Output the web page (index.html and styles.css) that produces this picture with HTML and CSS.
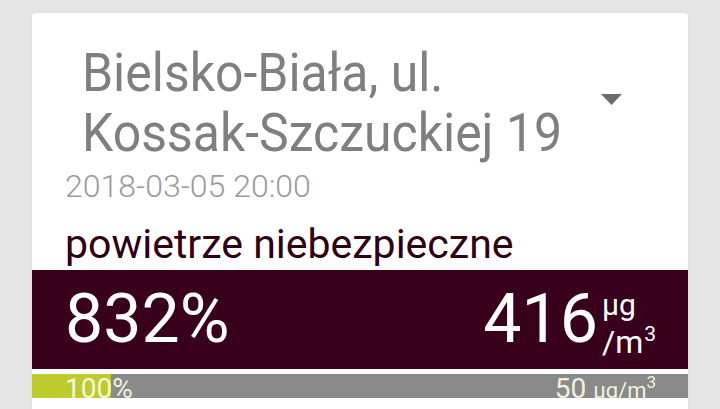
FILE: index.html
```html
<!DOCTYPE html>
<html lang="pl">
<head>
<meta charset="utf-8">
<title>Jakość powietrza</title>
<link rel="stylesheet" href="styles.css">
</head>
<body>
<div class="card">
  <div class="header">
    <div class="title">Bielsko-Biała, ul.<br>Kossak-Szczuckiej 19</div>
    <svg class="caret" width="21" height="11" viewBox="0 0 21 11"><path d="M0 0 H21 L10.5 11 Z" fill="#6b6b6b"/></svg>
  </div>
  <div class="date">2018-03-05 20:00</div>
  <div class="status">powietrze niebezpieczne</div>
  <div class="band">
    <div class="percent">832%</div>
    <div class="value">
      <span class="num">416</span>
      <span class="unit">
        <span class="unit-top">µg</span>
        <span class="unit-bottom">/m<span class="pow">3</span></span>
      </span>
    </div>
  </div>
  <div class="norm">
    <div class="norm-fill" style="width: 12%"></div>
    <div class="norm-text">
      <span class="norm-pct">100%</span>
      <span class="norm-limit">50 <span class="small">µg/m</span><span class="sup">3</span></span>
    </div>
  </div>
  <div class="rest"></div>
</div>
</body>
</html>
```

FILE: styles.css
```css
html, body {
  margin: 0;
  padding: 0;
}
body {
  background: #e5e5e5;
  font-family: Roboto, "Noto Sans", sans-serif;
  height: 409px;
  overflow: hidden;
  padding-top: 13px;
  box-sizing: border-box;
}
.card {
  margin: 0 32px;
  background: #ffffff;
  border-radius: 3px 3px 0 0;
  box-shadow: 0 0 2px rgba(0,0,0,0.08);
  padding-top: 30px;
}
.header {
  display: grid;
  grid-template-columns: 1fr 21px;
  align-items: start;
  padding-left: 50px;
  padding-right: 69px;
}
.title {
  font-size: 54px;
  line-height: 60px;
  color: #7f7f7f;
  font-weight: 400;
  white-space: nowrap;
  transform: scaleX(0.925);
  transform-origin: left top;
}
.caret {
  margin-top: 51px;
  display: block;
}
.date {
  margin-top: 5px;
  padding-left: 33px;
  font-size: 32px;
  line-height: 36px;
  color: #9b9b9b;
  font-weight: 300;
}
.status {
  margin-top: 18px;
  padding-left: 33px;
  font-size: 41px;
  line-height: 44px;
  color: #2d0014;
  margin-bottom: 4px;
}
.band {
  height: 99px;
  box-sizing: border-box;
  background: #38001b;
  color: #ffffff;
  display: flex;
  justify-content: space-between;
  align-items: flex-start;
  padding: 16px 32px 0 33px;
}
.percent {
  font-size: 68px;
  line-height: 66px;
}
.value {
  display: flex;
  align-items: flex-start;
}
.num {
  font-size: 68px;
  line-height: 66px;
}
.unit {
  display: flex;
  flex-direction: column;
  margin-left: 4px;
  margin-top: 4px;
}
.unit-top {
  font-size: 30px;
  line-height: 30px;
}
.unit-bottom {
  margin-top: 6px;
  font-size: 32px;
  line-height: 32px;
}
.pow {
  font-size: 21px;
  line-height: 0;
  vertical-align: 12px;
  margin-left: 1px;
}
.norm {
  margin-top: 5px;
  height: 24px;
  background: #8a8a8a;
  position: relative;
  overflow: hidden;
}
.norm-fill {
  position: absolute;
  left: 0;
  top: 0;
  bottom: 0;
  background: #bdcc2c;
}
.norm-text {
  position: relative;
  display: flex;
  justify-content: space-between;
  padding: 1px 32px 0 33px;
  font-size: 28px;
  line-height: 28px;
  color: rgba(255, 255, 235, 0.9);
}
.norm-limit .small {
  font-size: 22px;
}
.norm-limit .sup {
  font-size: 17px;
  line-height: 0;
  vertical-align: 10px;
}
.rest {
  height: 40px;
}
```
